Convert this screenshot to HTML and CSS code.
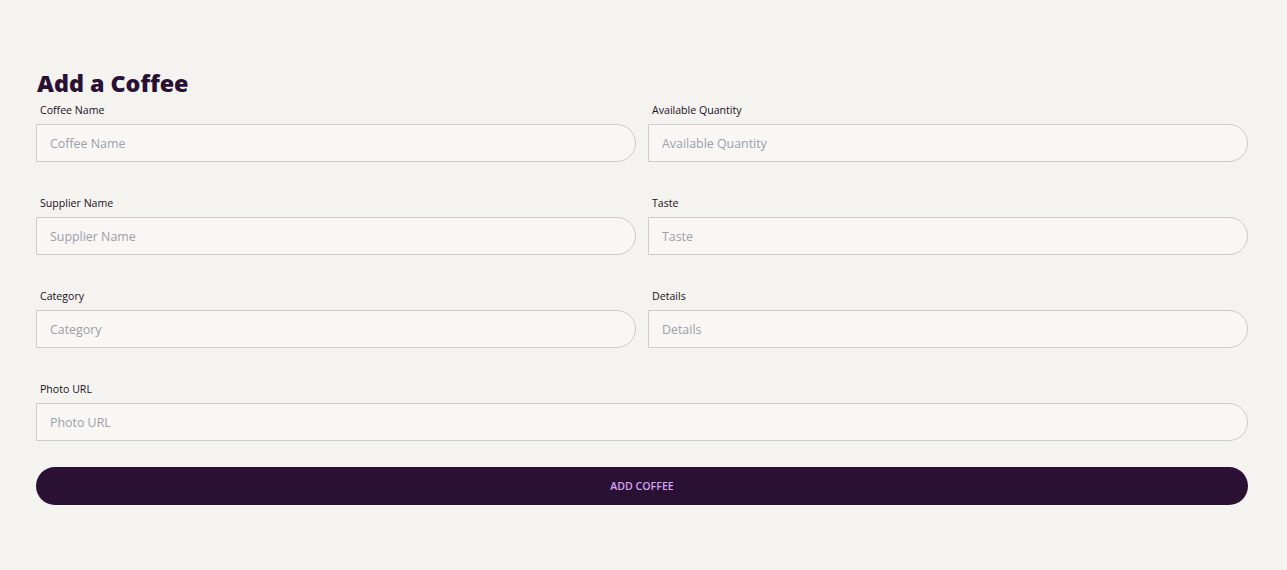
FILE: index.html
```html
<!DOCTYPE html>
<html lang="en">
<head>
<meta charset="utf-8">
<title>Add a Coffee</title>
<link rel="stylesheet" href="styles.css">
</head>
<body>
<main class="page">
  <h1 class="title">Add a Coffee</h1>
  <form class="coffee-form">
    <div class="grid">
      <div class="field">
        <label class="label">Coffee Name</label>
        <input class="input" type="text" placeholder="Coffee Name">
      </div>
      <div class="field">
        <label class="label">Available Quantity</label>
        <input class="input" type="text" placeholder="Available Quantity">
      </div>
      <div class="field">
        <label class="label">Supplier Name</label>
        <input class="input" type="text" placeholder="Supplier Name">
      </div>
      <div class="field">
        <label class="label">Taste</label>
        <input class="input" type="text" placeholder="Taste">
      </div>
      <div class="field">
        <label class="label">Category</label>
        <input class="input" type="text" placeholder="Category">
      </div>
      <div class="field">
        <label class="label">Details</label>
        <input class="input" type="text" placeholder="Details">
      </div>
      <div class="field field-wide">
        <label class="label">Photo URL</label>
        <input class="input" type="text" placeholder="Photo URL">
      </div>
    </div>
    <button class="submit" type="button">Add Coffee</button>
  </form>
</main>
</body>
</html>
```

FILE: styles.css
```css
* { box-sizing: border-box; }
html, body { margin: 0; padding: 0; }
body {
  background: #f4f3f0;
  font-family: "Open Sans", "Noto Sans", sans-serif;
  color: #2a1133;
}
.page {
  width: 1212px;
  margin-left: 36px;
  padding-top: 69px;
}
.title {
  margin: 0 0 5px 1px;
  font-size: 23.3px;
  line-height: 28px;
  font-weight: 800;
  color: #2a1133;
}
.grid {
  display: grid;
  grid-template-columns: 1fr 1fr;
  column-gap: 12px;
  row-gap: 33px;
}
.field { display: flex; flex-direction: column; }
.field-wide { grid-column: 1 / -1; }
.label {
  display: block;
  padding-left: 4px;
  font-size: 10.6px;
  line-height: 16px;
  color: #1c1020;
  margin-bottom: 6px;
}
.input {
  height: 38px;
  width: 100%;
  background: #f9f6f3;
  border: 1px solid #cfcacb;
  border-radius: 0 19px 19px 0;
  padding: 1px 13px 0;
  font-family: inherit;
  font-size: 12.4px;
  color: #333;
  outline: none;
}
.input::placeholder { color: #9aa0ad; }
.submit {
  display: block;
  margin-top: 26px;
  width: 100%;
  height: 38px;
  border: none;
  border-radius: 19px;
  background: #2a1133;
  color: #d7a2f4;
  font-family: inherit;
  font-size: 10.6px;
  font-weight: 600;
  text-transform: uppercase;
  cursor: pointer;
}
```
